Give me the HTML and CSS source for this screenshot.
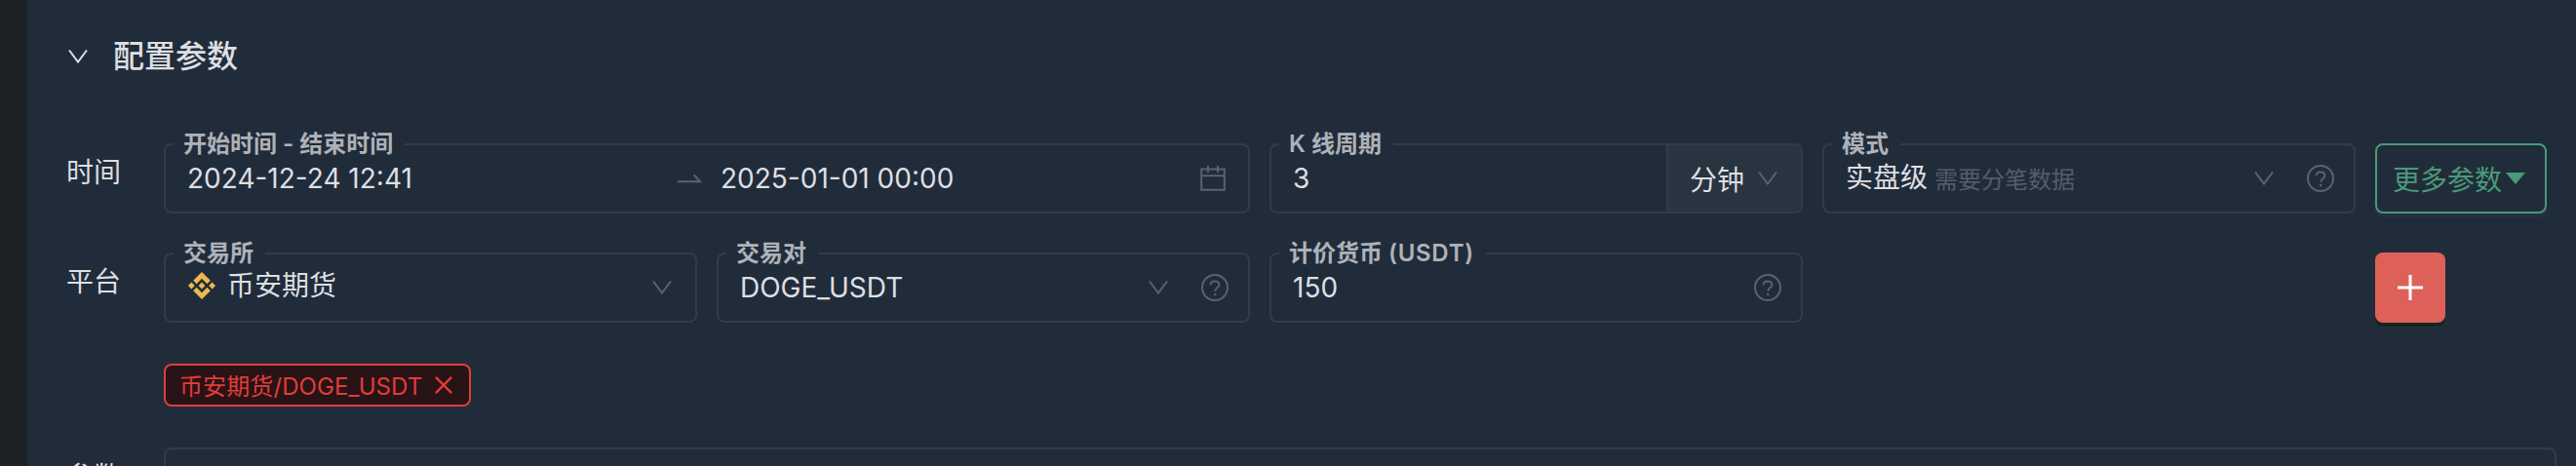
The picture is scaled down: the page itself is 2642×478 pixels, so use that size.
FILE: index.html
```html
<!DOCTYPE html>
<html lang="zh-CN">
<head>
    <meta charset="UTF-8">
    <meta name="viewport" content="width=device-width, initial-scale=1.0">
    <title>配置参数</title>
    <link rel="stylesheet" href="styles.css">
</head>
<body>

<div class="sidebar"></div>
<div class="panel">
    <div class="panel-header">
        <svg class="chevron" viewBox="0 0 20 14"><path d="M1 0.5L10 12.6L19 0.5"/></svg>
        <h2>配置参数</h2>
    </div>

    <div class="row row-time">
        <div class="row-label">时间</div>
        <fieldset class="field field-wide">
            <legend>开始时间 - 结束时间</legend>
            <span class="value date-start">2024-12-24 12:41</span>
            <svg class="icon arrow" viewBox="0 0 24 10"><path d="M0 8.2H23L16.5 1.2"/></svg>
            <span class="value">2025-01-01 00:00</span>
            <svg class="icon calendar" viewBox="0 0 26 26"><path d="M1.2 3.6H24.8V24.8H1.2ZM1.2 10.2H24.8M8 0V7M18 0V7"/></svg>
        </fieldset>
        <fieldset class="field field-addon">
            <legend>K 线周期</legend>
            <span class="value">3</span>
            <div class="addon">
                <span>分钟</span>
                <svg class="chevron muted" viewBox="0 0 20 14"><path d="M1 0.5L10 12.6L19 0.5"/></svg>
            </div>
        </fieldset>
        <fieldset class="field">
            <legend>模式</legend>
            <span class="value mode">实盘级</span>
            <span class="hint">需要分笔数据</span>
            <svg class="chevron muted push" viewBox="0 0 20 14"><path d="M1 0.5L10 12.6L19 0.5"/></svg>
            <svg class="icon help" viewBox="0 0 28 28"><circle cx="14" cy="14" r="13"/><path d="M9.6 11.2C9.6 8.6 11.5 7.4 14 7.4S18.4 8.8 18.4 11.2C18.4 14.2 14.2 14 14.2 17.8"/><path class="dot" d="M13.1 20h2.2v2.2h-2.2z"/></svg>
        </fieldset>
        <button class="btn btn-more">更多参数<svg class="caret" viewBox="0 0 20 12"><path d="M0 0H20L10 12Z"/></svg></button>
    </div>

    <div class="row row-platform">
        <div class="row-label">平台</div>
        <fieldset class="field">
            <legend>交易所</legend>
            <svg class="coin" viewBox="0 0 28 28">
                <path d="M14 0L22.8 8.8L19.4 12.2L14 6.8L8.6 12.2L5.2 8.8ZM14 28L22.8 19.2L19.4 15.8L14 21.2L8.6 15.8L5.2 19.2ZM0 14L3.4 10.6L6.8 14L3.4 17.4ZM28 14L24.6 10.6L21.2 14L24.6 17.4ZM14 10.6L17.4 14L14 17.4L10.6 14Z"/>
            </svg>
            <span class="value cjk">币安期货</span>
            <svg class="chevron muted push last" viewBox="0 0 20 14"><path d="M1 0.5L10 12.6L19 0.5"/></svg>
        </fieldset>
        <fieldset class="field">
            <legend>交易对</legend>
            <span class="value">DOGE_USDT</span>
            <svg class="chevron muted push" viewBox="0 0 20 14"><path d="M1 0.5L10 12.6L19 0.5"/></svg>
            <svg class="icon help" viewBox="0 0 28 28"><circle cx="14" cy="14" r="13"/><path d="M9.6 11.2C9.6 8.6 11.5 7.4 14 7.4S18.4 8.8 18.4 11.2C18.4 14.2 14.2 14 14.2 17.8"/><path class="dot" d="M13.1 20h2.2v2.2h-2.2z"/></svg>
        </fieldset>
        <fieldset class="field">
            <legend>计价货币 <span class="unit">(USDT)</span></legend>
            <span class="value">150</span>
            <svg class="icon help push" viewBox="0 0 28 28"><circle cx="14" cy="14" r="13"/><path d="M9.6 11.2C9.6 8.6 11.5 7.4 14 7.4S18.4 8.8 18.4 11.2C18.4 14.2 14.2 14 14.2 17.8"/><path class="dot" d="M13.1 20h2.2v2.2h-2.2z"/></svg>
        </fieldset>
        <div class="spacer"></div>
        <button class="btn btn-add"><svg viewBox="0 0 26 26"><path d="M13 0V26M0 13H26"/></svg></button>
    </div>

    <div class="tags">
        <span class="tag">币安期货/DOGE_USDT<svg viewBox="0 0 20 20"><path d="M1 1L19 19M19 1L1 19"/></svg></span>
    </div>

    <div class="row row-params">
        <div class="row-label">参数</div>
        <div class="params-box"></div>
    </div>
</div>

</body>
</html>
```
FILE: styles.css
```css
* {
    box-sizing: border-box;
}
body {
    margin: 0;
    height: 478px;
    display: flex;
    overflow: hidden;
    background-color: #212c3b;
    color: #dedfe1;
    font-family: Inter, "Noto Sans CJK SC", sans-serif;
    font-size: 28px;
}
svg {
    display: block;
    flex: none;
    fill: none;
    overflow: visible;
}
.sidebar {
    width: 28px;
    flex: none;
    background-color: #1e2227;
}
.panel {
    flex: 1;
    height: 478px;
    padding: 32px 20px 0 40px;
    overflow: hidden;
}
.panel-header {
    display: flex;
    align-items: center;
    height: 52px;
    padding-left: 2px;
    margin-bottom: 63px;
}
.panel-header h2 {
    margin: 0 0 0 26px;
    font-size: 32px;
    font-weight: 500;
    line-height: 52px;
}
.chevron {
    width: 20px;
    height: 14px;
    stroke: #dedfe1;
    stroke-width: 2;
}
.muted {
    stroke: #59636e;
}
.row {
    display: flex;
    gap: 20px;
    height: 72px;
    margin-bottom: 40px;
}
.row-label {
    width: 80px;
    line-height: 61px;
}
.field {
    display: flex;
    align-items: center;
    min-width: 0;
    width: 547px;
    height: 72px;
    margin: 0;
    padding: 0 30px 0 22px;
    border: 2px solid #313c49;
    border-radius: 8px;
}
.field legend {
    height: 2px;
    margin-left: -14px;
    padding: 0 12px 0 10px;
    font-size: 24px;
    font-weight: 600;
    line-height: 2px;
    color: #aeb2b8;
    white-space: nowrap;
}
.field .unit {
    letter-spacing: 0.7px;
}
.field-wide {
    width: 1114px;
}
.value {
    line-height: 68px;
    white-space: nowrap;
}
.cjk {
    padding-bottom: 3px;
    line-height: 65px;
}
.mode {
    padding-bottom: 1px;
    line-height: 67px;
}
.date-start {
    width: 503px;
}
.arrow {
    width: 24px;
    height: 10px;
    margin-right: 20px;
}
.icon {
    stroke: #59636e;
    stroke-width: 2;
}
.calendar {
    width: 26px;
    height: 26px;
    margin-left: auto;
    margin-right: -7px;
}
.field-addon {
    padding-right: 0;
}
.addon {
    display: flex;
    align-items: center;
    gap: 14px;
    width: 138px;
    height: 68px;
    margin-left: auto;
    padding: 0 0 1px 22px;
    border-left: 2px solid #313c49;
    border-radius: 0 6px 6px 0;
    background-color: #293441;
}
.hint {
    margin-left: 7px;
    padding-bottom: 1px;
    font-size: 24px;
    color: #545d69;
}
.push {
    margin-left: auto;
}
.help {
    width: 28px;
    height: 28px;
    margin-right: -10px;
}
.chevron + .help {
    margin-left: 34px;
}
.help .dot {
    fill: #59636e;
    stroke: none;
}
.last {
    margin-right: -6px;
}
.coin {
    width: 28px;
    height: 28px;
    margin-right: 12px;
    margin-bottom: 4px;
    margin-left: 1px;
    fill: #ebba4b;
}
.btn {
    display: flex;
    align-items: center;
    justify-content: center;
    height: 72px;
    padding: 0;
    border-radius: 8px;
    font-family: inherit;
    font-size: 28px;
}
.btn-more {
    width: 176px;
    gap: 4px;
    padding: 0 4px 1px 0;
    border: 2px solid #4a9a78;
    background-color: transparent;
    color: #4a9a78;
    box-shadow: 0 4px 0 #263240;
}
.caret {
    width: 20px;
    height: 12px;
    fill: #4a9a78;
}
.spacer {
    width: 547px;
}
.btn-add {
    width: 72px;
    border: none;
    background-color: #dd6159;
    box-shadow: 0 4px 0 #19231f;
}
.btn-add svg {
    width: 26px;
    height: 26px;
    stroke: #fff;
    stroke-width: 3;
}
.tags {
    display: flex;
    margin: 42px 0 42px 100px;
}
.tag {
    display: flex;
    align-items: center;
    justify-content: space-between;
    width: 315px;
    height: 44px;
    padding: 0 17px 1px 14px;
    border: 2px solid #e23c39;
    border-radius: 8px;
    background-color: #281316;
    color: #e23c39;
    font-size: 24px;
    letter-spacing: 0.1px;
    white-space: nowrap;
}
.tag svg {
    width: 18px;
    height: 18px;
    stroke: #e23c39;
    stroke-width: 2.6;
}
.row-params {
    margin: 0;
}
.params-box {
    width: 2454px;
    border: 2px solid #313c49;
    border-radius: 8px;
}
```
